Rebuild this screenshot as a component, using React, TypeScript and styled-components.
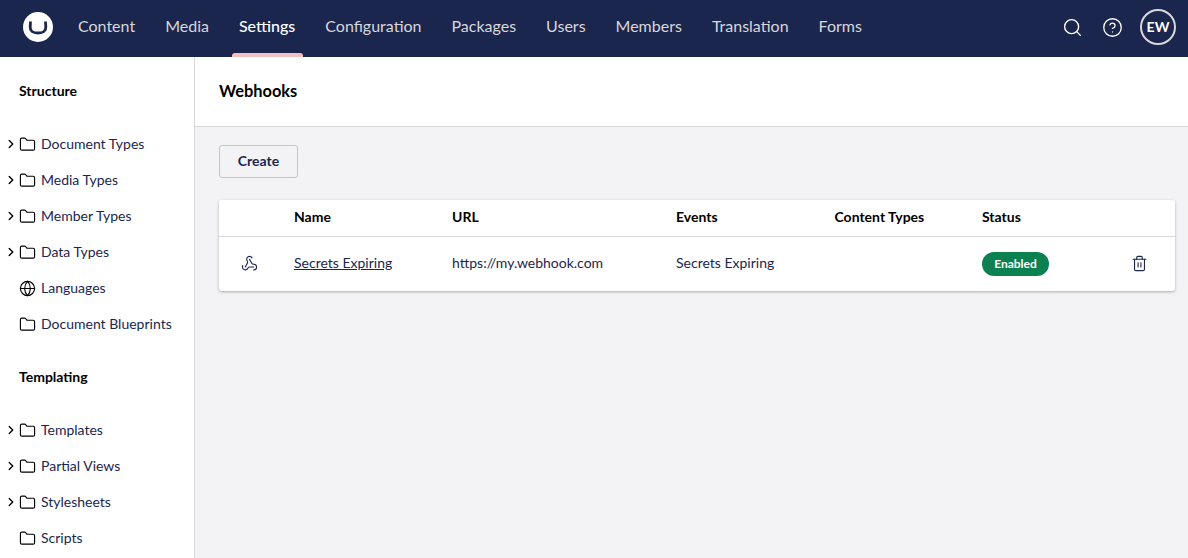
import { FC } from 'react'
import styled, { createGlobalStyle } from 'styled-components'
import { ChevronRight, CircleHelp, Folder, Globe, Search, Trash2, Webhook } from 'lucide-react'

const GlobalStyle = createGlobalStyle`
  html, body {
    margin: 0;
    height: 100%;
    overflow: hidden;
    font-family: Lato, "Liberation Sans", sans-serif;
    font-size: 14px;
    line-height: 20px;
    color: #1b264f;
    background: #f3f3f5;
  }
`

const Page = styled.div`
  display: flex;
  flex-direction: column;
  height: 558px;
`

const Header = styled.header`
  display: flex;
  align-items: center;
  flex: 0 0 57px;
  height: 57px;
  background: #1b264f;
  padding: 0 12px 0 23px;
`

const Logo = styled.svg`
  width: 30px;
  height: 30px;
  flex: none;
  margin: -3px 10px 0 0;
`

const Tabs = styled.nav`
  display: flex;
  align-self: stretch;
  flex: 1;
`

const Tab = styled.a<{ $active?: boolean }>`
  position: relative;
  display: flex;
  align-items: center;
  padding: 0 15px 6px;
  font-size: 16px;
  color: ${(p) => (p.$active ? '#ffffff' : '#d8d7d9')};
  font-weight: ${(p) => (p.$active ? 500 : 400)};

  &::after {
    content: '';
    display: ${(p) => (p.$active ? 'block' : 'none')};
    position: absolute;
    left: 8px;
    right: 7px;
    bottom: 0;
    height: 4px;
    border-radius: 3px 3px 0 0;
    background: #f5c1bc;
  }
`

const Tools = styled.div`
  display: flex;
  align-items: center;
  margin-top: -3px;
  color: #ffffff;
`

const ToolIcon = styled.span`
  display: flex;
  justify-content: center;
  width: 40px;
`

const Avatar = styled.div`
  box-sizing: border-box;
  width: 36px;
  height: 36px;
  margin-left: 8px;
  border: 2px solid #d8d7d9;
  border-radius: 50%;
  display: flex;
  align-items: center;
  justify-content: center;
  font-size: 14px;
  font-weight: 700;
  color: #ffffff;
`

const Body = styled.div`
  display: flex;
  flex: 1;
  min-height: 0;
`

const Sidebar = styled.aside`
  box-sizing: border-box;
  flex: 0 0 195px;
  background: #ffffff;
  border-right: 1px solid #d8d7d9;
  overflow: hidden;
`

const Section = styled.section`
  & + & {
    margin-top: 1px;
  }
`

const SectionTitle = styled.h3`
  box-sizing: border-box;
  margin: 0;
  height: 69px;
  padding: 0 0 2px 19px;
  display: flex;
  align-items: center;
  font-size: 14px;
  font-weight: 700;
  color: #000000;
`

const TreeRow = styled.div`
  display: flex;
  align-items: center;
  height: 36px;
  padding-left: 4px;
  color: #1b264f;
`

const Caret = styled.span`
  display: flex;
  width: 15px;
  flex: none;
  color: #000000;
`

const TreeIcon = styled.span`
  display: flex;
  width: 22px;
  flex: none;
  margin-top: 1px;
  color: #000000;
`

const Main = styled.main`
  flex: 1;
  min-width: 0;
  background: #f3f3f5;
`

const TitleBar = styled.div`
  box-sizing: border-box;
  height: 70px;
  padding: 0 24px 1px;
  display: flex;
  align-items: center;
  background: #ffffff;
  border-bottom: 1px solid #d8d7d9;
`

const Title = styled.h1`
  margin: 0;
  font-size: 16.4px;
  font-weight: 700;
  color: #000000;
`

const Content = styled.div`
  padding: 18px 13px 0 24px;
`

const CreateButton = styled.button`
  box-sizing: border-box;
  display: block;
  width: 79px;
  height: 33px;
  padding: 0 0 2px;
  border: 1px solid #c4c4c4;
  border-radius: 3px;
  background: transparent;
  font: 700 14px/20px Lato, "Liberation Sans", sans-serif;
  color: #1b264f;
`

const Table = styled.div`
  margin-top: 22px;
  background: #ffffff;
  border-radius: 3px;
  box-shadow: 0 1px 3px rgba(0, 0, 0, 0.3);
`

const Row = styled.div<{ $head?: boolean }>`
  display: grid;
  grid-template-columns: 75px 158px 224px 158.5px 147.5px 1fr 44px;
  align-items: center;
  height: ${(p) => (p.$head ? '37px' : '54px')};
  box-sizing: border-box;
  padding-bottom: 2px;
  border-bottom: ${(p) => (p.$head ? '1px solid #d8d7d9' : 'none')};
  font-weight: ${(p) => (p.$head ? 700 : 400)};
  color: ${(p) => (p.$head ? '#000000' : '#1b264f')};
`

const IconCell = styled.div`
  display: flex;
  padding-left: 21.5px;
  color: #1b264f;
`

const NameLink = styled.a`
  color: #1b264f;
  text-decoration: underline;
`

const Badge = styled.span`
  display: flex;
  align-items: center;
  justify-content: center;
  width: 67px;
  height: 24px;
  margin-top: 2px;
  border-radius: 12px;
  background: #0b8152;
  color: #ffffff;
  font-size: 12px;
  font-weight: 700;
`

const TrashCell = styled.div`
  display: flex;
  margin-left: -0.5px;
  color: #1b264f;
`

const structure = [
  { label: 'Document Types', caret: true, icon: 'folder' },
  { label: 'Media Types', caret: true, icon: 'folder' },
  { label: 'Member Types', caret: true, icon: 'folder' },
  { label: 'Data Types', caret: true, icon: 'folder' },
  { label: 'Languages', caret: false, icon: 'globe' },
  { label: 'Document Blueprints', caret: false, icon: 'folder' },
]

const templating = [
  { label: 'Templates', caret: true, icon: 'folder' },
  { label: 'Partial Views', caret: true, icon: 'folder' },
  { label: 'Stylesheets', caret: true, icon: 'folder' },
  { label: 'Scripts', caret: false, icon: 'folder' },
]

const tabs = ['Content', 'Media', 'Settings', 'Configuration', 'Packages', 'Users', 'Members', 'Translation', 'Forms']

const Tree: FC<{ items: typeof structure }> = ({ items }) => (
  <>
    {items.map((item) => (
      <TreeRow key={item.label}>
        <Caret>{item.caret && <ChevronRight size={14} strokeWidth={2.4} />}</Caret>
        <TreeIcon>
          {item.icon === 'globe' ? <Globe size={17} strokeWidth={1.6} /> : <Folder size={17} strokeWidth={1.6} />}
        </TreeIcon>
        {item.label}
      </TreeRow>
    ))}
  </>
)

export default function App() {
  return (
    <Page>
      <GlobalStyle />
      <Header>
        <Logo viewBox="0 0 30 30">
          <circle cx="15" cy="15" r="15" fill="#fff" />
          <path d="M7.5 9.5 L7.2 15 Q7 21 15 21 Q23 21 22.8 15 L22.5 9.5" fill="none" stroke="#1b264f" strokeWidth="2.8" />
        </Logo>
        <Tabs>
          {tabs.map((t) => (
            <Tab key={t} $active={t === 'Settings'}>
              {t}
            </Tab>
          ))}
        </Tabs>
        <Tools>
          <ToolIcon>
            <Search size={21} strokeWidth={1.6} />
          </ToolIcon>
          <ToolIcon>
            <CircleHelp size={21} strokeWidth={1.5} />
          </ToolIcon>
          <Avatar>EW</Avatar>
        </Tools>
      </Header>
      <Body>
        <Sidebar>
          <Section>
            <SectionTitle>Structure</SectionTitle>
            <Tree items={structure} />
          </Section>
          <Section>
            <SectionTitle>Templating</SectionTitle>
            <Tree items={templating} />
          </Section>
        </Sidebar>
        <Main>
          <TitleBar>
            <Title>Webhooks</Title>
          </TitleBar>
          <Content>
            <CreateButton>Create</CreateButton>
            <Table>
              <Row $head>
                <div />
                <div>Name</div>
                <div>URL</div>
                <div>Events</div>
                <div>Content Types</div>
                <div>Status</div>
                <div />
              </Row>
              <Row>
                <IconCell>
                  <Webhook size={17} strokeWidth={1.6} />
                </IconCell>
                <div>
                  <NameLink>Secrets Expiring</NameLink>
                </div>
                <div>https://my.webhook.com</div>
                <div>Secrets Expiring</div>
                <div />
                <div>
                  <Badge>Enabled</Badge>
                </div>
                <TrashCell>
                  <Trash2 size={17} strokeWidth={1.6} />
                </TrashCell>
              </Row>
            </Table>
          </Content>
        </Main>
      </Body>
    </Page>
  )
}
